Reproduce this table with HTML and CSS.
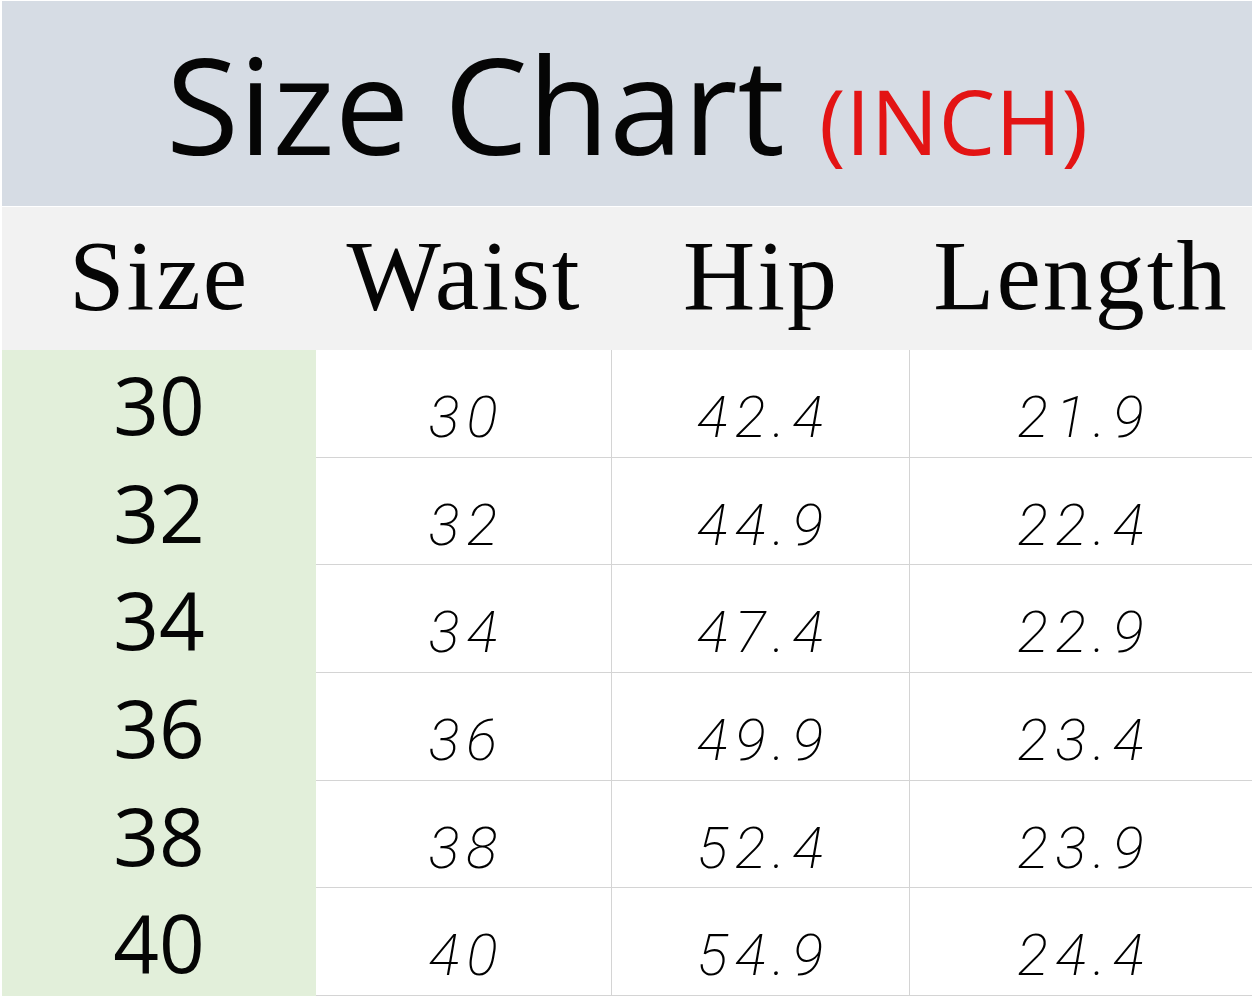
FILE: index.html
```html
<!DOCTYPE html>
<html lang="en">
<head>
<meta charset="utf-8">
<title>Size Chart (INCH)</title>
<link rel="stylesheet" href="styles.css">
</head>
<body>
<main class="chart">
  <div class="title"><span class="title-main">Size Chart</span><span class="title-unit">(INCH)</span></div>

  <div class="head">Size</div>
  <div class="head">Waist</div>
  <div class="head">Hip</div>
  <div class="head">Length</div>

  <div class="size">30</div><div class="val">30</div><div class="val">42.4</div><div class="val last">21.9</div>
  <div class="size">32</div><div class="val">32</div><div class="val">44.9</div><div class="val last">22.4</div>
  <div class="size">34</div><div class="val">34</div><div class="val">47.4</div><div class="val last">22.9</div>
  <div class="size">36</div><div class="val">36</div><div class="val">49.9</div><div class="val last">23.4</div>
  <div class="size">38</div><div class="val">38</div><div class="val">52.4</div><div class="val last">23.9</div>
  <div class="size">40</div><div class="val">40</div><div class="val">54.9</div><div class="val last">24.4</div>
</main>
</body>
</html>
```

FILE: styles.css
```css
html, body {
  margin: 0;
  padding: 0;
  background: #ffffff;
}

body {
  width: 1252px;
  height: 1000px;
  overflow: hidden;
}

.chart {
  display: grid;
  grid-template-columns: 314px 296px 298px 342px;
  grid-template-rows: 205px 144px repeat(6, 107.67px);
  padding: 1px 0 0 2px;
}

.title {
  grid-column: 1 / -1;
  background: #d6dce4;
  text-align: center;
  font-family: "Open Sans", "Noto Sans", sans-serif;
  line-height: 1;
  padding-top: 36px;
  box-sizing: border-box;
  white-space: nowrap;
}

.title-main {
  font-size: 133px;
  color: #050505;
}

.title-unit {
  font-size: 90px;
  color: #e31414;
  margin-left: 34px;
}

.head {
  background: #f2f2f2;
  font-family: "Liberation Serif", "Times New Roman", serif;
  font-size: 100px;
  letter-spacing: 2px;
  line-height: 1;
  color: #050505;
  text-align: center;
  padding-top: 19px;
  box-sizing: border-box;
  border-top: 1px solid #ffffff;
}

.size {
  background: #e2efda;
  font-family: "Open Sans", "Liberation Sans", sans-serif;
  font-size: 80px;
  line-height: 1;
  color: #050505;
  text-align: center;
  padding-top: 14px;
  box-sizing: border-box;
}

.val {
  font-family: Roboto, "Liberation Sans", sans-serif;
  font-weight: 200;
  font-style: italic;
  font-size: 58px;
  line-height: 1;
  letter-spacing: 7px;
  font-variant-numeric: tabular-nums;
  color: #000000;
  text-align: center;
  padding-top: 38px;
  padding-left: 6px;
  box-sizing: border-box;
  border-bottom: 1px solid #d4d4d4;
  border-right: 1px solid #d4d4d4;
}

.val.last {
  border-right: none;
}
```
